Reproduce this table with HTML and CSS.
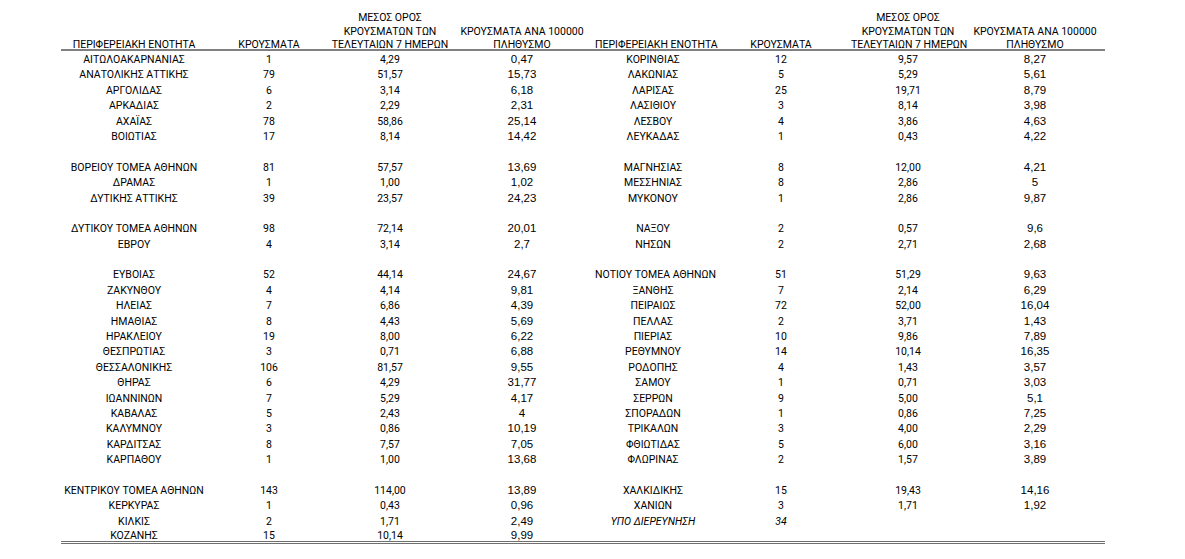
FILE: index.html
```html
<!DOCTYPE html>
<html lang="el">
<head>
<meta charset="utf-8">
<title>Κρούσματα ανά περιφερειακή ενότητα</title>
<link rel="stylesheet" href="styles.css">
</head>
<body>
<div class="page">
<table class="cases">
<colgroup>
<col class="c-name-a"><col class="c-cases-a"><col class="c-avg-a"><col class="c-rate-a">
<col class="c-name-b"><col class="c-cases-b"><col class="c-avg-b"><col class="c-rate-b">
</colgroup>
<thead>
<tr>
<th><div class="h">ΠΕΡΙΦΕΡΕΙΑΚΗ ΕΝΟΤΗΤΑ</div></th>
<th><div class="h">ΚΡΟΥΣΜΑΤΑ</div></th>
<th><div class="h">ΜΕΣΟΣ ΟΡΟΣ<br>ΚΡΟΥΣΜΑΤΩΝ ΤΩΝ<br>ΤΕΛΕΥΤΑΙΩΝ 7 ΗΜΕΡΩΝ</div></th>
<th><div class="h">ΚΡΟΥΣΜΑΤΑ ΑΝΑ 100000<br>ΠΛΗΘΥΣΜΟ</div></th>
<th><div class="h">ΠΕΡΙΦΕΡΕΙΑΚΗ ΕΝΟΤΗΤΑ</div></th>
<th><div class="h">ΚΡΟΥΣΜΑΤΑ</div></th>
<th><div class="h">ΜΕΣΟΣ ΟΡΟΣ<br>ΚΡΟΥΣΜΑΤΩΝ ΤΩΝ<br>ΤΕΛΕΥΤΑΙΩΝ 7 ΗΜΕΡΩΝ</div></th>
<th><div class="h">ΚΡΟΥΣΜΑΤΑ ΑΝΑ 100000<br>ΠΛΗΘΥΣΜΟ</div></th>
</tr>
</thead>
<tbody>
<tr><td>ΑΙΤΩΛΟΑΚΑΡΝΑΝΙΑΣ</td><td>1</td><td>4,29</td><td class="r">0,47</td><td>ΚΟΡΙΝΘΙΑΣ</td><td>12</td><td>9,57</td><td class="r">8,27</td></tr>
<tr><td>ΑΝΑΤΟΛΙΚΗΣ ΑΤΤΙΚΗΣ</td><td>79</td><td>51,57</td><td class="r">15,73</td><td>ΛΑΚΩΝΙΑΣ</td><td>5</td><td>5,29</td><td class="r">5,61</td></tr>
<tr><td>ΑΡΓΟΛΙΔΑΣ</td><td>6</td><td>3,14</td><td class="r">6,18</td><td>ΛΑΡΙΣΑΣ</td><td>25</td><td>19,71</td><td class="r">8,79</td></tr>
<tr><td>ΑΡΚΑΔΙΑΣ</td><td>2</td><td>2,29</td><td class="r">2,31</td><td>ΛΑΣΙΘΙΟΥ</td><td>3</td><td>8,14</td><td class="r">3,98</td></tr>
<tr><td>ΑΧΑΪΑΣ</td><td>78</td><td>58,86</td><td class="r">25,14</td><td>ΛΕΣΒΟΥ</td><td>4</td><td>3,86</td><td class="r">4,63</td></tr>
<tr><td>ΒΟΙΩΤΙΑΣ</td><td>17</td><td>8,14</td><td class="r">14,42</td><td>ΛΕΥΚΑΔΑΣ</td><td>1</td><td>0,43</td><td class="r">4,22</td></tr>
<tr class="gap"><td></td><td></td><td></td><td></td><td></td><td></td><td></td><td></td></tr>
<tr><td>ΒΟΡΕΙΟΥ ΤΟΜΕΑ ΑΘΗΝΩΝ</td><td>81</td><td>57,57</td><td class="r">13,69</td><td>ΜΑΓΝΗΣΙΑΣ</td><td>8</td><td>12,00</td><td class="r">4,21</td></tr>
<tr><td>ΔΡΑΜΑΣ</td><td>1</td><td>1,00</td><td class="r">1,02</td><td>ΜΕΣΣΗΝΙΑΣ</td><td>8</td><td>2,86</td><td class="r">5</td></tr>
<tr><td>ΔΥΤΙΚΗΣ ΑΤΤΙΚΗΣ</td><td>39</td><td>23,57</td><td class="r">24,23</td><td>ΜΥΚΟΝΟΥ</td><td>1</td><td>2,86</td><td class="r">9,87</td></tr>
<tr class="gap"><td></td><td></td><td></td><td></td><td></td><td></td><td></td><td></td></tr>
<tr><td>ΔΥΤΙΚΟΥ ΤΟΜΕΑ ΑΘΗΝΩΝ</td><td>98</td><td>72,14</td><td class="r">20,01</td><td>ΝΑΞΟΥ</td><td>2</td><td>0,57</td><td class="r">9,6</td></tr>
<tr><td>ΕΒΡΟΥ</td><td>4</td><td>3,14</td><td class="r">2,7</td><td>ΝΗΣΩΝ</td><td>2</td><td>2,71</td><td class="r">2,68</td></tr>
<tr class="gap"><td></td><td></td><td></td><td></td><td></td><td></td><td></td><td></td></tr>
<tr><td>ΕΥΒΟΙΑΣ</td><td>52</td><td>44,14</td><td class="r">24,67</td><td>ΝΟΤΙΟΥ ΤΟΜΕΑ ΑΘΗΝΩΝ</td><td>51</td><td>51,29</td><td class="r">9,63</td></tr>
<tr><td>ΖΑΚΥΝΘΟΥ</td><td>4</td><td>4,14</td><td class="r">9,81</td><td>ΞΑΝΘΗΣ</td><td>7</td><td>2,14</td><td class="r">6,29</td></tr>
<tr><td>ΗΛΕΙΑΣ</td><td>7</td><td>6,86</td><td class="r">4,39</td><td>ΠΕΙΡΑΙΩΣ</td><td>72</td><td>52,00</td><td class="r">16,04</td></tr>
<tr><td>ΗΜΑΘΙΑΣ</td><td>8</td><td>4,43</td><td class="r">5,69</td><td>ΠΕΛΛΑΣ</td><td>2</td><td>3,71</td><td class="r">1,43</td></tr>
<tr><td>ΗΡΑΚΛΕΙΟΥ</td><td>19</td><td>8,00</td><td class="r">6,22</td><td>ΠΙΕΡΙΑΣ</td><td>10</td><td>9,86</td><td class="r">7,89</td></tr>
<tr><td>ΘΕΣΠΡΩΤΙΑΣ</td><td>3</td><td>0,71</td><td class="r">6,88</td><td>ΡΕΘΥΜΝΟΥ</td><td>14</td><td>10,14</td><td class="r">16,35</td></tr>
<tr><td>ΘΕΣΣΑΛΟΝΙΚΗΣ</td><td>106</td><td>81,57</td><td class="r">9,55</td><td>ΡΟΔΟΠΗΣ</td><td>4</td><td>1,43</td><td class="r">3,57</td></tr>
<tr><td>ΘΗΡΑΣ</td><td>6</td><td>4,29</td><td class="r">31,77</td><td>ΣΑΜΟΥ</td><td>1</td><td>0,71</td><td class="r">3,03</td></tr>
<tr><td>ΙΩΑΝΝΙΝΩΝ</td><td>7</td><td>5,29</td><td class="r">4,17</td><td>ΣΕΡΡΩΝ</td><td>9</td><td>5,00</td><td class="r">5,1</td></tr>
<tr><td>ΚΑΒΑΛΑΣ</td><td>5</td><td>2,43</td><td class="r">4</td><td>ΣΠΟΡΑΔΩΝ</td><td>1</td><td>0,86</td><td class="r">7,25</td></tr>
<tr><td>ΚΑΛΥΜΝΟΥ</td><td>3</td><td>0,86</td><td class="r">10,19</td><td>ΤΡΙΚΑΛΩΝ</td><td>3</td><td>4,00</td><td class="r">2,29</td></tr>
<tr><td>ΚΑΡΔΙΤΣΑΣ</td><td>8</td><td>7,57</td><td class="r">7,05</td><td>ΦΘΙΩΤΙΔΑΣ</td><td>5</td><td>6,00</td><td class="r">3,16</td></tr>
<tr><td>ΚΑΡΠΑΘΟΥ</td><td>1</td><td>1,00</td><td class="r">13,68</td><td>ΦΛΩΡΙΝΑΣ</td><td>2</td><td>1,57</td><td class="r">3,89</td></tr>
<tr class="gap"><td></td><td></td><td></td><td></td><td></td><td></td><td></td><td></td></tr>
<tr><td>ΚΕΝΤΡΙΚΟΥ ΤΟΜΕΑ ΑΘΗΝΩΝ</td><td>143</td><td>114,00</td><td class="r">13,89</td><td>ΧΑΛΚΙΔΙΚΗΣ</td><td>15</td><td>19,43</td><td class="r">14,16</td></tr>
<tr><td>ΚΕΡΚΥΡΑΣ</td><td>1</td><td>0,43</td><td class="r">0,96</td><td>ΧΑΝΙΩΝ</td><td>3</td><td>1,71</td><td class="r">1,92</td></tr>
<tr><td>ΚΙΛΚΙΣ</td><td>2</td><td>1,71</td><td class="r">2,49</td><td class="it">ΥΠΟ ΔΙΕΡΕΥΝΗΣΗ</td><td class="it">34</td><td></td><td></td></tr>
<tr class="last"><td>ΚΟΖΑΝΗΣ</td><td>15</td><td>10,14</td><td class="r">9,99</td><td></td><td></td><td></td><td></td></tr>
</tbody>
</table>
</div>
</body>
</html>
```
FILE: styles.css
```css
html, body {
  margin: 0;
  padding: 0;
  background: #ffffff;
}

.page {
  padding: 11px 0 0 61px;
}

.cases {
  border-collapse: collapse;
  table-layout: fixed;
  width: 1044px;
  font-family: Roboto, "Liberation Sans", sans-serif;
  font-size: 10.5px;
  color: #000;
}

.c-name-a { width: 146px; }
.c-cases-a { width: 124px; }
.c-avg-a { width: 118px; }
.c-rate-a { width: 146px; }
.c-name-b { width: 116px; }
.c-cases-b { width: 140px; }
.c-avg-b { width: 114px; }
.c-rate-b { width: 140px; }

.cases th {
  font-weight: normal;
  text-align: center;
  vertical-align: bottom;
  white-space: nowrap;
  padding: 0;
  border-bottom: 2px solid #808080;
}

.cases th .h {
  line-height: 13.5px;
  margin-bottom: -2.5px;
}

.cases td {
  padding: 2px 0 0;
  height: 13.39px;
  line-height: 13.39px;
  text-align: center;
  white-space: nowrap;
}

.cases td.r {
  font-family: "Liberation Sans", Arial, sans-serif;
  font-size: 11.5px;
}

.cases td.it {
  font-style: italic;
}

.cases tr.last td {
  height: 11px;
  line-height: 11px;
  padding-top: 2px;
  border-bottom: 3px double #707070;
}
```
